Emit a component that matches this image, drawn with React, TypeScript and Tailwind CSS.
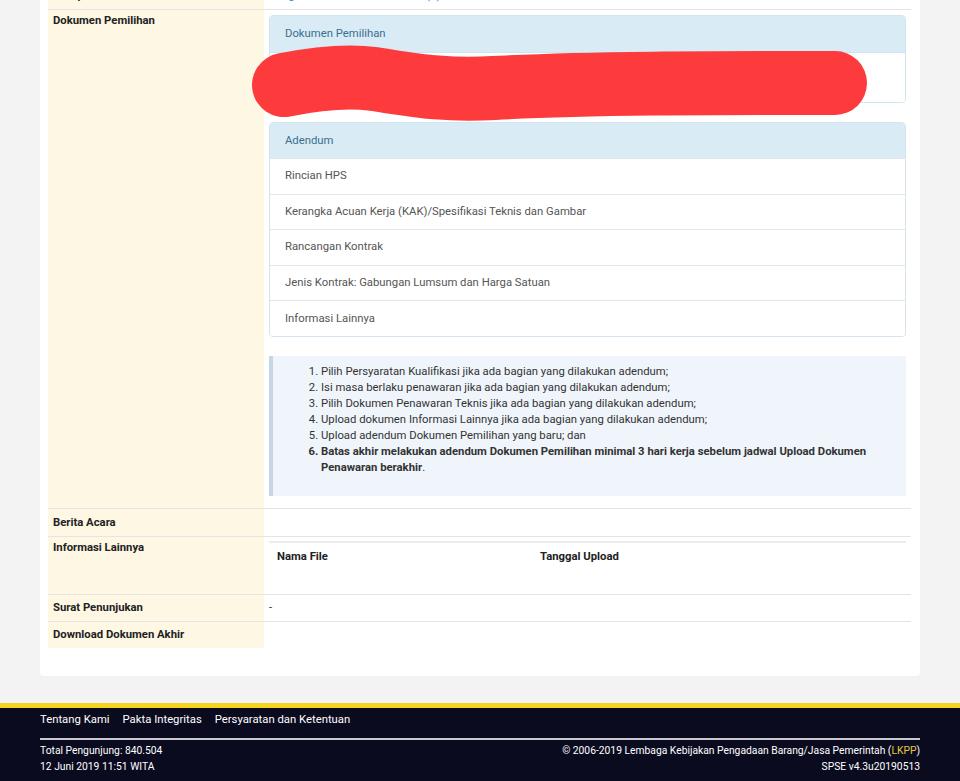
import type { ReactNode } from 'react'

const adendumItems = [
  'Rincian HPS',
  'Kerangka Acuan Kerja (KAK)/Spesifikasi Teknis dan Gambar',
  'Rancangan Kontrak',
  'Jenis Kontrak: Gabungan Lumsum dan Harga Satuan',
  'Informasi Lainnya',
]

const petunjuk = [
  'Pilih Persyaratan Kualifikasi jika ada bagian yang dilakukan adendum;',
  'Isi masa berlaku penawaran jika ada bagian yang dilakukan adendum;',
  'Pilih Dokumen Penawaran Teknis jika ada bagian yang dilakukan adendum;',
  'Upload dokumen Informasi Lainnya jika ada bagian yang dilakukan adendum;',
  'Upload adendum Dokumen Pemilihan yang baru; dan',
]

function Row({ label, children, first, labelClass = 'py-[5px]' }: { label: string; children?: ReactNode; first?: boolean; labelClass?: string }) {
  return (
    <div className={`flex ${first ? '' : 'border-t border-[#e4e4e4]'}`}>
      <div className={`w-[216px] shrink-0 bg-[#fdf7e4] px-[5px] font-bold text-[#222] ${labelClass}`}>{label}</div>
      <div className="relative flex-1 min-w-0">{children}</div>
    </div>
  )
}

export default function App() {
  return (
    <div className="min-h-[781px] bg-[#f3f3f3] flex flex-col text-[11.3px] leading-[16px]" style={{ fontFamily: 'Roboto, "Noto Sans", sans-serif' }}>
      {/* Detail paket */}
      <div className="px-[40px]">
        <div className="-mt-[17px] bg-white rounded-[4px] pl-[8px] pr-[9px] pb-[28px]">
          <Row label="Tahap Tender Saat ini" first>
            <div className="px-[5px] py-[5px] text-[#2f8ac6]">Pengumuman Pascakualifikasi (1)</div>
          </Row>

          <Row label="Dokumen Pemilihan" labelClass="pt-[3px]">
            <div className="px-[5px] pt-[5px] pb-[12px] flex flex-col gap-[19px]">
              <div className="rounded-[4px] border border-[#cfe6f1] overflow-hidden">
                <div className="h-[36px] bg-[#d9ebf5] px-[15px] flex items-center text-[#3a6f8f]">Dokumen Pemilihan</div>
                <div className="h-[50px] bg-white border-t border-[#cfe6f1]" />
              </div>

              <div className="rounded-[4px] border border-[#d6e4ee] overflow-hidden">
                <div className="h-[35px] bg-[#d9ebf5] px-[15px] flex items-center text-[#3a6f8f]">Adendum</div>
                {adendumItems.map(item => (
                  <div key={item} className="h-[35.6px] border-t border-[#e3e7ea] bg-white px-[15px] flex items-center text-[#555]">
                    {item}
                  </div>
                ))}
              </div>

              <div className="bg-[#eff5fb] border-l-[4px] border-[#c7d6e6] pt-[8px] pb-[20px] pr-[20px]">
                <ol className="list-decimal pl-[48px] text-[#333]">
                  {petunjuk.map(p => (
                    <li key={p}>{p}</li>
                  ))}
                  <li className="font-bold">
                    Batas akhir melakukan adendum Dokumen Pemilihan minimal 3 hari kerja sebelum jadwal Upload Dokumen Penawaran berakhir<span className="font-normal">.</span>
                  </li>
                </ol>
              </div>
            </div>

            {/* redaction stroke */}
            <svg className="absolute left-0 top-0 pointer-events-none overflow-visible" width="640" height="130">
              <path
                d="M20 75 C 50 69, 80 65, 110 69 C 150 75, 180 81, 230 78 C 320 73, 450 73, 571 73"
                fill="none"
                stroke="#fd3b3c"
                strokeWidth="64"
                strokeLinecap="round"
              />
            </svg>
          </Row>

          <Row label="Berita Acara" labelClass="pt-[6px] pb-[5px]" />

          <Row label="Informasi Lainnya" labelClass="pt-[3px]">
            <div className="px-[5px] pt-[4px]">
              <div className="border-t-2 border-[#ececec] flex px-[8px] pt-[6px] h-[53px] font-bold text-[#222]">
                <div className="w-[263px]">Nama File</div>
                <div>Tanggal Upload</div>
              </div>
            </div>
          </Row>

          <Row label="Surat Penunjukan">
            <div className="px-[5px] py-[5px] text-[#333]">-</div>
          </Row>

          <Row label="Download Dokumen Akhir" />
        </div>
      </div>

      <div className="h-[27px]" />

      {/* Footer */}
      <footer className="border-t-[5px] border-[#f6d31c] bg-[#0b0b1f] text-white px-[40px] pt-[4px] pb-[7px] flex-1">
        <div className="flex gap-[13px] text-[11.3px] leading-[16px]">
          <span>Tentang Kami</span>
          <span>Pakta Integritas</span>
          <span>Persyaratan dan Ketentuan</span>
        </div>
        <div className="mt-[10px] border-t-2 border-[#c9c9cf]" />
        <div className="flex justify-between mt-[3px] text-[10.3px]">
          <div className="flex flex-col">
            <span className="leading-[16px]">Total Pengunjung: 840.504</span>
            <span className="leading-[16px]">12 Juni 2019 11:51 WITA</span>
          </div>
          <div className="flex flex-col items-end">
            <span className="leading-[16px]">
              © 2006-2019 Lembaga Kebijakan Pengadaan Barang/Jasa Pemerintah (<span className="text-[#e9c93a]">LKPP</span>)
            </span>
            <span className="leading-[16px]">SPSE v4.3u20190513</span>
          </div>
        </div>
      </footer>
    </div>
  )
}
